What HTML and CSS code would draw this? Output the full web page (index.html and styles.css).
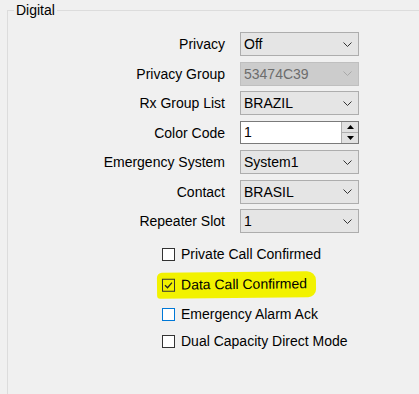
FILE: index.html
```html
<!DOCTYPE html>
<html>
<head>
<meta charset="utf-8">
<link rel="stylesheet" href="styles.css">
</head>
<body>
<fieldset class="group">
  <legend class="group-title">Digital</legend>
  <div class="form">
    <label class="lbl">Privacy</label>
    <div class="combo"><span class="val">Off</span><svg class="chev" width="9" height="5" viewBox="0 0 9 5"><polyline points="0.5,0.5 4.5,4.5 8.5,0.5" fill="none" stroke="#333" stroke-width="1"/></svg></div>

    <label class="lbl">Privacy Group</label>
    <div class="combo disabled"><span class="val">53474C39</span><svg class="chev" width="9" height="5" viewBox="0 0 9 5"><polyline points="0.5,0.5 4.5,4.5 8.5,0.5" fill="none" stroke="#a8a8a8" stroke-width="1"/></svg></div>

    <label class="lbl">Rx Group List</label>
    <div class="combo"><span class="val">BRAZIL</span><svg class="chev" width="9" height="5" viewBox="0 0 9 5"><polyline points="0.5,0.5 4.5,4.5 8.5,0.5" fill="none" stroke="#333" stroke-width="1"/></svg></div>

    <label class="lbl">Color Code</label>
    <div class="spin"><span class="val">1</span>
      <div class="spin-btns">
        <div class="spin-btn"><svg width="7" height="4" viewBox="0 0 7 4"><polygon points="3.5,0 7,4 0,4" fill="#000"/></svg></div>
        <div class="spin-btn"><svg width="7" height="4" viewBox="0 0 7 4"><polygon points="0,0 7,0 3.5,4" fill="#000"/></svg></div>
      </div>
    </div>

    <label class="lbl">Emergency System</label>
    <div class="combo"><span class="val">System1</span><svg class="chev" width="9" height="5" viewBox="0 0 9 5"><polyline points="0.5,0.5 4.5,4.5 8.5,0.5" fill="none" stroke="#333" stroke-width="1"/></svg></div>

    <label class="lbl">Contact</label>
    <div class="combo"><span class="val">BRASIL</span><svg class="chev" width="9" height="5" viewBox="0 0 9 5"><polyline points="0.5,0.5 4.5,4.5 8.5,0.5" fill="none" stroke="#333" stroke-width="1"/></svg></div>

    <label class="lbl">Repeater Slot</label>
    <div class="combo"><span class="val">1</span><svg class="chev" width="9" height="5" viewBox="0 0 9 5"><polyline points="0.5,0.5 4.5,4.5 8.5,0.5" fill="none" stroke="#333" stroke-width="1"/></svg></div>
  </div>

  <div class="checks">
    <div class="check row1"><span class="box"></span><span class="ctext">Private Call Confirmed</span></div>
    <div class="check row2"><span class="hl"><span class="box checked"><svg width="11" height="11" viewBox="0 0 11 11"><polyline points="2,5.5 4.5,8 9,3" fill="none" stroke="#222" stroke-width="1.3"/></svg></span><span class="ctext">Data Call Confirmed</span></span></div>
    <div class="check row3"><span class="box focus"></span><span class="ctext">Emergency Alarm Ack</span></div>
    <div class="check row4"><span class="box"></span><span class="ctext">Dual Capacity Direct Mode</span></div>
  </div>
</fieldset>
</body>
</html>
```

FILE: styles.css
```css
html, body {
  margin: 0;
  padding: 0;
  background: #f0f0f0;
  font-family: "Liberation Sans", Arial, sans-serif;
  font-size: 14px;
  color: #000;
  overflow: hidden;
}
body {
  padding-top: 3px;
}
.group {
  margin: 0 0 0 7px;
  padding: 0 0 0 6px;
  border: 1px solid #dcdcdc;
  border-right: none;
  border-bottom: none;
  height: 391px;
  box-sizing: border-box;
}
.group-title {
  padding: 0 2px;
  line-height: 14px;
  height: 14px;
  color: #000;
}
.form {
  display: grid;
  grid-template-columns: 211px 119px;
  column-gap: 15px;
  row-gap: 5.5px;
  margin-top: 15px;
  grid-auto-rows: 24px;
}
.lbl {
  text-align: right;
  line-height: 24px;
  white-space: nowrap;
}
.combo, .spin {
  box-sizing: border-box;
  border: 1px solid #adadad;
  background: #e5e5e5;
  display: flex;
  align-items: center;
  padding-left: 3px;
  height: 24px;
}
.combo .val { flex: 1; }
.chev { margin-right: 6px; }
.combo.disabled {
  background: #cccccc;
  border-color: #bfbfbf;
  color: #6d6d6d;
}
.spin {
  background: #fff;
  border-color: #7a7a7a;
  padding-right: 0;
  height: 23px;
}
.spin .val { flex: 1; }
.spin-btns {
  display: flex;
  flex-direction: column;
  width: 16px;
  height: 21px;
  border-left: 1px solid #adadad;
}
.spin-btn {
  flex: 1;
  display: flex;
  align-items: center;
  justify-content: center;
  background: #e1e1e1;
}
.spin-btn + .spin-btn { border-top: 1px solid #adadad; }
.checks {
  display: flex;
  flex-direction: column;
  padding-left: 148px;
  margin-top: 15px;
}
.check {
  display: flex;
  align-items: center;
  height: 13px;
}
.row2, .row3 { margin-top: 17px; }
.row4 { margin-top: 14px; }
.hl {
  display: flex;
  align-items: center;
  background: #f2f200;
  margin-left: -5px;
  padding: 6px 9px 7px 5px;
  border-radius: 5px 9px 8px 3px;
  transform: rotate(-0.6deg);
}
.box {
  box-sizing: border-box;
  width: 13px;
  height: 13px;
  border: 1px solid #333;
  background: #fff;
  display: flex;
  align-items: center;
  justify-content: center;
  flex: none;
}
.box.checked { background: transparent; }
.box.focus { border-color: #0078d7; }
.ctext {
  margin-left: 6px;
  white-space: nowrap;
  line-height: 13px;
}
```
